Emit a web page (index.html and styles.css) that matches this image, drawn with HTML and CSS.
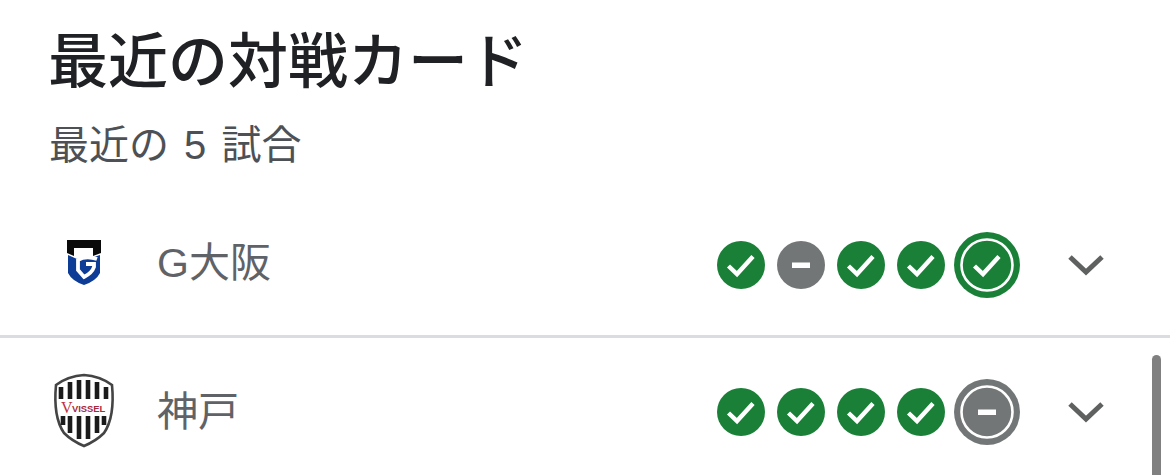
FILE: index.html
```html
<!DOCTYPE html>
<html>
<head>
    <meta charset="UTF-8">
    <title>最近の対戦カード</title>
    <link rel="stylesheet" href="styles.css">
</head>
<body>
    <svg class="defs" width="0" height="0">
        <symbol id="win" viewBox="0 0 48 48">
            <circle cx="24" cy="24" r="24" fill="#1a8038"/>
            <path d="M11.5 25 L20 33 L36 15.5" fill="none" stroke="#fff" stroke-width="4.4"/>
        </symbol>
        <symbol id="draw" viewBox="0 0 48 48">
            <circle cx="24" cy="24" r="24" fill="#727676"/>
            <rect x="15" y="21.5" width="18" height="5.5" fill="#fff"/>
        </symbol>
        <symbol id="win-big" viewBox="0 0 66 66">
            <circle cx="33" cy="33" r="33" fill="#1a8038"/>
            <circle cx="33" cy="33" r="25.5" fill="none" stroke="#fff" stroke-width="2.6"/>
            <path d="M20.5 34 L29 42 L45 24.5" fill="none" stroke="#fff" stroke-width="4.4"/>
        </symbol>
        <symbol id="draw-big" viewBox="0 0 66 66">
            <circle cx="33" cy="33" r="33" fill="#727676"/>
            <circle cx="33" cy="33" r="25.5" fill="none" stroke="#fff" stroke-width="2.6"/>
            <rect x="24" y="30.5" width="18" height="5.5" fill="#fff"/>
        </symbol>
        <symbol id="chevron" viewBox="0 0 36 22">
            <path d="M2 3 L18 18 L34 3" fill="none" stroke="#5f6060" stroke-width="5"/>
        </symbol>
    </svg>

    <div class="card">
        <h1 class="title">最近の対戦カード</h1>
        <div class="sub">最近の 5 試合</div>

        <div class="row row-first">
            <svg class="logo" viewBox="0 0 68 68">
                <path d="M17 9 H51 V22 L43 25 V17 H24 V25 L17 22 Z" fill="#0a0a0a"/>
                <path d="M18 24 L27 28 L32 26 H44 L50 24 V42 Q46 50 34 54 Q22 50 18 42 Z" fill="#0c3c96"/>
                <path d="M47 28 Q36 24 28 29 V39 L34 46 Q42 42 44 36 V33 H36" fill="none" stroke="#fff" stroke-width="3.8"/>
            </svg>
            <div class="team team-first">G大阪</div>
            <div class="results">
                <svg class="dot"><use href="#win"/></svg>
                <svg class="dot"><use href="#draw"/></svg>
                <svg class="dot"><use href="#win"/></svg>
                <svg class="dot"><use href="#win"/></svg>
                <svg class="dot-big"><use href="#win-big"/></svg>
            </div>
            <svg class="chevron"><use href="#chevron"/></svg>
        </div>

        <div class="row row-second">
            <svg class="logo logo-tall" viewBox="0 0 68 90">
                <path d="M34 8 Q50 9 62 18 Q65 50 54 66 Q46 74 34 79 Q22 74 14 66 Q3 50 6 18 Q18 9 34 8 Z" fill="#fff" stroke="#444" stroke-width="2.6"/>
                <g stroke="#1a1a1a" stroke-width="4.6">
                    <path d="M11 20 V32"/><path d="M20 15 V32"/><path d="M29 13 V32"/><path d="M38 13 V32"/><path d="M47 15 V32"/><path d="M56 20 V32"/>
                    <path d="M13 49 V58"/><path d="M20 49 V66"/><path d="M29 49 V72"/><path d="M38 49 V72"/><path d="M47 49 V66"/><path d="M54 49 V58"/>
                </g>
                <text class="vissel-v" x="11" y="46">V</text>
                <text class="vissel" x="22" y="45">VISSEL</text>
            </svg>
            <div class="team">神戸</div>
            <div class="results">
                <svg class="dot"><use href="#win"/></svg>
                <svg class="dot"><use href="#win"/></svg>
                <svg class="dot"><use href="#win"/></svg>
                <svg class="dot"><use href="#win"/></svg>
                <svg class="dot-big"><use href="#draw-big"/></svg>
            </div>
            <svg class="chevron"><use href="#chevron"/></svg>
        </div>
    </div>
    <div class="scrollbar"></div>
</body>
</html>
```

FILE: styles.css
```css
html, body {
    margin: 0;
    padding: 0;
    height: 475px;
    overflow: hidden;
    background-color: #fff;
}
body {
    position: relative;
    font-family: "Liberation Sans", "Noto Sans CJK JP", sans-serif;
}
.defs {
    display: block;
    height: 0;
}
.card {
    padding-top: 26px;
}
.title {
    margin: 0;
    padding-left: 48px;
    font-size: 60px;
    font-weight: 500;
    line-height: 74px;
    color: #202124;
}
.sub {
    margin-top: 21px;
    padding-left: 49px;
    font-size: 40px;
    word-spacing: 4px;
    line-height: 48px;
    color: #4d5156;
}
.row {
    display: flex;
    align-items: center;
    padding: 0 66px 0 50px;
}
.row-first {
    height: 141px;
    margin-top: 25px;
    border-bottom: 3px solid #dadce0;
}
.row-second {
    height: 147px;
}
.logo {
    width: 68px;
    height: 68px;
    flex: none;
}
.logo-tall {
    height: 90px;
}
.team {
    flex: 1;
    margin-left: 39px;
    padding-bottom: 8px;
    font-size: 41px;
    color: #5f6368;
}
.team-first {
    padding-bottom: 12px;
}
.results {
    display: flex;
    align-items: center;
    gap: 12px;
}
.dot {
    width: 48px;
    height: 48px;
}
.dot-big {
    width: 66px;
    height: 66px;
    margin-left: -3px;
}
.chevron {
    width: 36px;
    height: 22px;
    margin-left: 48px;
}
.vissel {
    font-family: "Liberation Sans", sans-serif;
    font-size: 9.4px;
    font-weight: 700;
    fill: #a8283c;
}
.vissel-v {
    font-family: "Liberation Serif", serif;
    font-size: 16px;
    fill: #c0303f;
}
.scrollbar {
    position: absolute;
    left: 1152px;
    top: 355px;
    width: 9px;
    height: 130px;
    border-radius: 5px;
    background-color: #808080;
}
```
